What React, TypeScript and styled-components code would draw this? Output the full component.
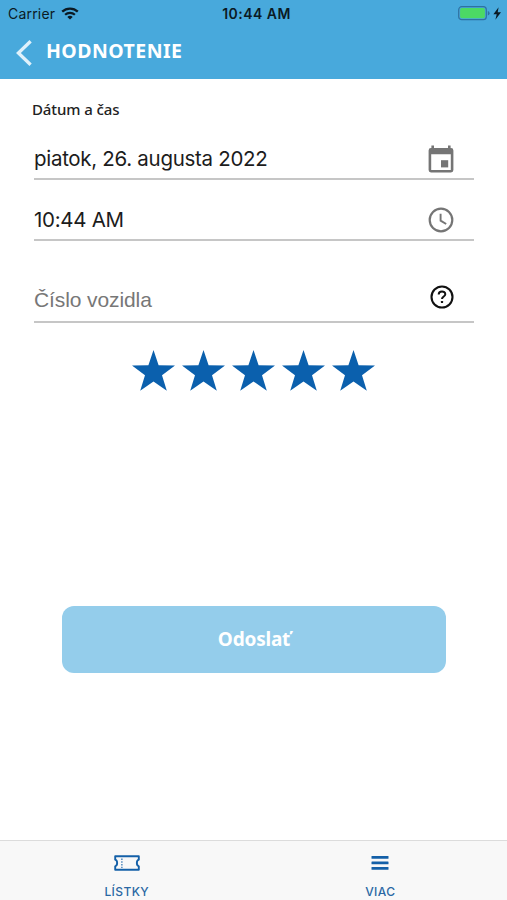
import React from 'react';
import styled, {createGlobalStyle} from "styled-components";

interface IFieldProps {
    value: string;
    placeholder?: boolean;
    height: number;
    icon: React.ReactNode;
}

const WifiIcon: React.FC = () => (
    <svg width="18" height="13" viewBox="0 0 18 13" fill="none" stroke="#0b1a24">
        <path d="M1.2 4.7C5.6 .6 12.4 .6 16.8 4.7" strokeWidth="2.3"/>
        <path d="M4.1 7.8C6.9 5.2 11.1 5.2 13.9 7.8" strokeWidth="2.2"/>
        <path d="M9 12.6L6.3 9.9C7.8 8.5 10.2 8.5 11.7 9.9Z" fill="#0b1a24" stroke="none"/>
    </svg>
);

const BatteryIcon: React.FC = () => (
    <svg width="44" height="15" viewBox="0 0 44 15">
        <rect x=".7" y=".7" width="27.6" height="13" rx="3" fill="none" stroke="#2f71a0" strokeWidth="1.2"/>
        <rect x="2.1" y="2.1" width="24.8" height="10.2" rx="1.8" fill="#4cd964"/>
        <path d="M29.8 5Q31.6 5.4 31.6 7.2Q31.6 9 29.8 9.4Z" fill="#2f71a0"/>
        <path d="M40.6 1.2L35.4 8.2H38.7L37.4 13.8L43 6.3H39.7Z" fill="#0b1a24"/>
    </svg>
);

const BackIcon: React.FC = () => (
    <svg width="16" height="26" viewBox="0 0 16 26" fill="none" stroke="#dff1fb" strokeWidth="3.3">
        <path d="M14.6 1.2L2.4 13L14.6 24.8"/>
    </svg>
);

const CalendarIcon: React.FC = () => (
    <svg width="26" height="28" viewBox="0 0 26 28" fill="#757575">
        <path fillRule="evenodd" d="M3.4 .6H6V3H20V.6H22.6V3H23Q25.4 3 25.4 5.4V25Q25.4 27.4 23 27.4H3Q.6 27.4 .6 25V5.4Q.6 3 3 3H3.4ZM3.2 9.2V25H22.8V9.2Z"/>
        <rect x="13" y="15.2" width="7.2" height="7.2"/>
    </svg>
);

const ClockIcon: React.FC = () => (
    <svg width="26" height="26" viewBox="0 0 26 26" fill="none" stroke="#757575">
        <circle cx="13" cy="13" r="11.3" strokeWidth="2.2"/>
        <path d="M12.6 6.8V13.6L18.2 17" strokeWidth="1.9"/>
    </svg>
);

const HelpIcon: React.FC = () => (
    <svg width="24" height="24" viewBox="0 0 24 24" fill="none" stroke="#111">
        <circle cx="12" cy="12" r="10.5" strokeWidth="2.1"/>
        <path d="M8.7 9.4C8.7 5.6 15.3 5.6 15.3 9.2C15.3 11.5 12 11.5 12 14" strokeWidth="2"/>
        <rect x="10.9" y="15.9" width="2.2" height="2.2" rx=".5" fill="#111" stroke="none"/>
    </svg>
);

const StarIcon: React.FC = () => (
    <svg width="43" height="41" viewBox="0 0 43 41">
        <path d="M21.5 0L26.6 15.2L43 15.5L30 25.3L34.8 40.8L21.5 31.5L8.2 40.8L13 25.3L0 15.5L16.4 15.2Z" fill="#0b60ad"/>
    </svg>
);

const TicketIcon: React.FC = () => (
    <svg width="26" height="16" viewBox="0 0 26 16" fill="none" stroke="#1460a8">
        <path d="M1.2 1.2H24.8V4.7C22.2 5.6 22.2 10.4 24.8 11.3V14.8H1.2V11.3C3.8 10.4 3.8 5.6 1.2 4.7Z" strokeWidth="1.9" strokeLinejoin="round"/>
        <path d="M7.9 3.4V13" strokeWidth="1.1" strokeDasharray="1.6 1.2"/>
    </svg>
);

const MenuIcon: React.FC = () => (
    <svg width="18" height="16" viewBox="0 0 18 16" fill="#1460a8">
        <rect x=".5" y="1" width="17" height="2.7" rx=".5"/>
        <rect x=".5" y="6.5" width="17" height="2.7" rx=".5"/>
        <rect x=".5" y="12" width="17" height="2.7" rx=".5"/>
    </svg>
);

const Field: React.FC<IFieldProps> = ({value, placeholder, height, icon}) => (
    <FieldRow $height={height}>
        <FieldValue $placeholder={placeholder}>{value}</FieldValue>
        <FieldIcon $raised={placeholder}>{icon}</FieldIcon>
    </FieldRow>
);

const App: React.FC = () => {
    return (
        <Screen>
            <GlobalStyle/>

            <StatusBar>
                <Carrier>Carrier <WifiIcon/></Carrier>
                <Clock>10:44 AM</Clock>
                <Battery><BatteryIcon/></Battery>
            </StatusBar>

            <Header>
                <BackIcon/>
                <Title>HODNOTENIE</Title>
            </Header>

            <Form>
                <Label>Dátum a čas</Label>
                <Field value="piatok, 26. augusta 2022" height={44} icon={<CalendarIcon/>}/>
                <Field value="10:44 AM" height={61} icon={<ClockIcon/>}/>
                <Field value="Číslo vozidla" placeholder height={82} icon={<HelpIcon/>}/>
                <Stars>
                    {[1, 2, 3, 4, 5].map((n) => <StarIcon key={n}/>)}
                </Stars>
                <SubmitButton>Odoslať</SubmitButton>
            </Form>

            <TabBar>
                <Tab><TicketIcon/><TabLabel>LÍSTKY</TabLabel></Tab>
                <Tab><MenuIcon/><TabLabel>VIAC</TabLabel></Tab>
            </TabBar>
        </Screen>
    );
};

export default App;

const GlobalStyle = createGlobalStyle`
    * {
      box-sizing: border-box;
    }
    body {
      margin: 0;
      background: #fff;
    }
    svg {
      display: block;
      flex-shrink: 0;
    }
`;

const Screen = styled.div`
    display: flex;
    flex-direction: column;
    height: 900px;
    overflow: hidden;
    font-family: Inter, "Liberation Sans", sans-serif;
`;

const StatusBar = styled.div`
    display: grid;
    grid-template-columns: 1fr auto 1fr;
    align-items: center;
    height: 27px;
    padding: 0 5px 0 8px;
    background: #48a9dc;
    color: #0b1a24;
    font-size: 14px;
    line-height: 27px;
`;

const Carrier = styled.div`
    display: flex;
    align-items: center;
    gap: 6px;
    letter-spacing: 0.2px;
`;

const Clock = styled.div`
    font-weight: 600;
    letter-spacing: 0.45px;
    margin-left: 3px;
`;

const Battery = styled.div`
    justify-self: end;
`;

const Header = styled.header`
    display: flex;
    align-items: center;
    gap: 14px;
    height: 52px;
    padding: 0 16px 1px;
    background: #48a9dc;
`;

const Title = styled.h1`
    margin: 0 0 4px;
    color: #fff;
    font: 700 19.5px/26px "Noto Sans", sans-serif;
    letter-spacing: 0.45px;
`;

const Form = styled.main`
    flex: 1;
    display: flex;
    flex-direction: column;
    padding: 20px 33px 0 34px;
`;

const Label = styled.label`
    margin: 0 0 16px -2px;
    color: #222;
    font: 500 15px/21px "Noto Sans", sans-serif;
    letter-spacing: -0.1px;
`;

const FieldRow = styled.div<{$height: number}>`
    display: flex;
    align-items: flex-end;
    justify-content: space-between;
    height: ${({$height}) => $height}px;
    padding-right: 17px;
    border-bottom: 2px solid #c6c6c6;
`;

const FieldValue = styled.div<{$placeholder?: boolean}>`
    height: ${({$placeholder}) => $placeholder ? 34 : 32}px;
    color: ${({$placeholder}) => $placeholder ? "#777" : "#1c1c1c"};
    font-family: ${({$placeholder}) => $placeholder ? '"Liberation Sans", sans-serif' : 'Inter, sans-serif'};
    font-size: ${({$placeholder}) => $placeholder ? 21 : 20.5}px;
    line-height: 25px;
    letter-spacing: ${({$placeholder}) => $placeholder ? -0.1 : -0.3}px;
`;

const FieldIcon = styled.div<{$raised?: boolean}>`
    display: flex;
    align-items: center;
    justify-content: center;
    width: 32px;
    height: 38px;
    margin: ${({$raised}) => $raised ? "0 -1px 5px 0" : "0"};
`;

const Stars = styled.div`
    display: flex;
    justify-content: center;
    gap: 7.2px;
    margin: 27px 1px 0 0;
`;

const SubmitButton = styled.button`
    height: 67px;
    margin: 215px 28px 0;
    padding: 0 0 2px;
    border: 0;
    border-radius: 12px;
    background: #94cdeb;
    color: #fff;
    font: 700 19px/26px "Noto Sans", sans-serif;
    letter-spacing: -0.2px;
`;

const TabBar = styled.nav`
    display: grid;
    grid-template-columns: 1fr 1fr;
    height: 60px;
    border-top: 1px solid #dcdcdc;
    background: #f8f8f8;
`;

const Tab = styled.div`
    display: flex;
    flex-direction: column;
    align-items: center;
    gap: 13px;
    padding-top: 14px;
`;

const TabLabel = styled.span`
    color: #2a68a4;
    font-size: 12px;
    font-weight: 500;
    line-height: 16px;
    letter-spacing: 0.4px;
`;
